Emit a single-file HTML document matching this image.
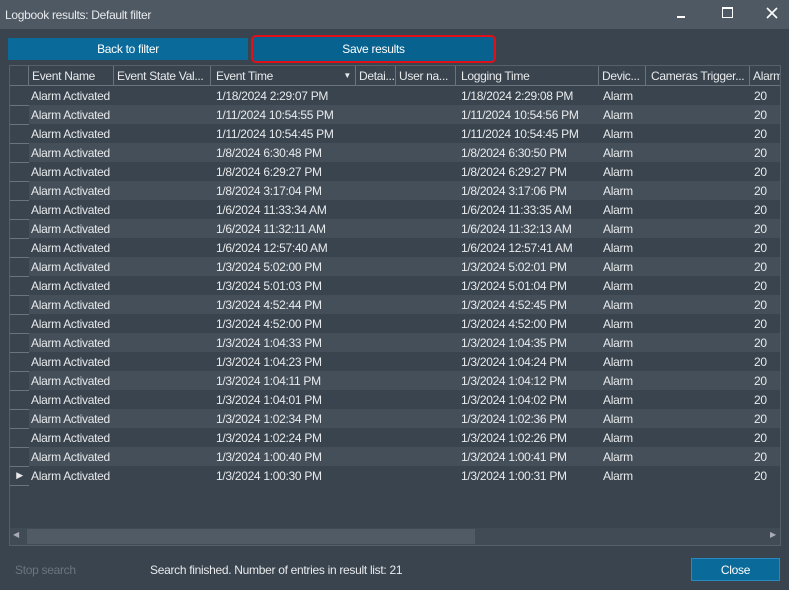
<!DOCTYPE html><html><head><style>
body{margin:0;width:789px;height:590px;background:#3a444e;font-family:"Liberation Sans",sans-serif;font-size:12px;color:#e8eaec;position:relative;overflow:hidden;letter-spacing:-0.3px}
.a{position:absolute;white-space:nowrap}
.tb{left:0;top:0;width:789px;height:29px;background:#4f5964}
.btn{height:22px;background:#0a6a9a;color:#fff;text-align:center;line-height:22px}
.grid{left:9px;top:65px;width:772px;height:481px;border:1px solid #56606a;box-sizing:border-box;background:#3a444e;overflow:hidden}
.hd{position:absolute;top:0;height:20px;line-height:20px;border-right:1px solid #6b747d;border-bottom:1px solid #6b747d;box-sizing:border-box;padding-left:3px;overflow:hidden}
table{position:absolute;left:0;top:20px;border-collapse:collapse;table-layout:fixed}
td{height:19px;padding:0;white-space:nowrap;overflow:hidden}
tr:nth-child(even){background:#454f59}
td.rh{width:19px;background:#3a444e;border-bottom:1px solid #6b747d;box-sizing:border-box}
</style></head><body>
<div class="a tb"></div>
<div class="a" style="left:5px;top:8px;font-size:12px">Logbook results: Default filter</div>
<div class="a" style="left:677px;top:16px;width:8px;height:2px;background:#fff"></div>
<div class="a" style="left:722px;top:7px;width:9px;height:8px;border:1.5px solid #fff;border-top-width:2px"></div>
<svg class="a" style="left:766px;top:7px" width="12" height="12"><path d="M1 1L11 11M11 1L1 11" stroke="#fff" stroke-width="1.6"/></svg>
<div class="a btn" style="left:8px;top:38px;width:240px">Back to filter</div>
<div class="a btn" style="left:251px;top:35px;width:241px;height:24px;line-height:24px;border:2px solid #e0101a;border-radius:5px;background:#07628f">Save results</div>
<div class="a grid">
<div class="hd" style="left:0;width:19px"></div>
<div class="hd" style="left:19px;width:85px">Event Name</div>
<div class="hd" style="left:104px;width:97px">Event State Val...</div>
<div class="hd" style="left:201px;width:145px;padding-left:5px">Event Time<span style="position:absolute;right:4px;font-size:8px">▼</span></div>
<div class="hd" style="left:346px;width:40px">Detai...</div>
<div class="hd" style="left:386px;width:60px">User na...</div>
<div class="hd" style="left:446px;width:143px;padding-left:5px">Logging Time</div>
<div class="hd" style="left:589px;width:47px">Devic...</div>
<div class="hd" style="left:636px;width:104px;padding-left:5px">Cameras Trigger...</div>
<div class="hd" style="left:740px;width:40px">Alarm</div>
<table style="width:770px">
<colgroup><col style="width:19px"><col style="width:2px"><col style="width:185px"><col style="width:245px"><col style="width:142px"><col style="width:151px"><col style="width:26px"></colgroup>
<tr><td class="rh"></td><td></td><td>Alarm Activated</td><td>1/18/2024 2:29:07 PM</td><td>1/18/2024 2:29:08 PM</td><td>Alarm</td><td>20</td></tr>
<tr><td class="rh"></td><td></td><td>Alarm Activated</td><td>1/11/2024 10:54:55 PM</td><td>1/11/2024 10:54:56 PM</td><td>Alarm</td><td>20</td></tr>
<tr><td class="rh"></td><td></td><td>Alarm Activated</td><td>1/11/2024 10:54:45 PM</td><td>1/11/2024 10:54:45 PM</td><td>Alarm</td><td>20</td></tr>
<tr><td class="rh"></td><td></td><td>Alarm Activated</td><td>1/8/2024 6:30:48 PM</td><td>1/8/2024 6:30:50 PM</td><td>Alarm</td><td>20</td></tr>
<tr><td class="rh"></td><td></td><td>Alarm Activated</td><td>1/8/2024 6:29:27 PM</td><td>1/8/2024 6:29:27 PM</td><td>Alarm</td><td>20</td></tr>
<tr><td class="rh"></td><td></td><td>Alarm Activated</td><td>1/8/2024 3:17:04 PM</td><td>1/8/2024 3:17:06 PM</td><td>Alarm</td><td>20</td></tr>
<tr><td class="rh"></td><td></td><td>Alarm Activated</td><td>1/6/2024 11:33:34 AM</td><td>1/6/2024 11:33:35 AM</td><td>Alarm</td><td>20</td></tr>
<tr><td class="rh"></td><td></td><td>Alarm Activated</td><td>1/6/2024 11:32:11 AM</td><td>1/6/2024 11:32:13 AM</td><td>Alarm</td><td>20</td></tr>
<tr><td class="rh"></td><td></td><td>Alarm Activated</td><td>1/6/2024 12:57:40 AM</td><td>1/6/2024 12:57:41 AM</td><td>Alarm</td><td>20</td></tr>
<tr><td class="rh"></td><td></td><td>Alarm Activated</td><td>1/3/2024 5:02:00 PM</td><td>1/3/2024 5:02:01 PM</td><td>Alarm</td><td>20</td></tr>
<tr><td class="rh"></td><td></td><td>Alarm Activated</td><td>1/3/2024 5:01:03 PM</td><td>1/3/2024 5:01:04 PM</td><td>Alarm</td><td>20</td></tr>
<tr><td class="rh"></td><td></td><td>Alarm Activated</td><td>1/3/2024 4:52:44 PM</td><td>1/3/2024 4:52:45 PM</td><td>Alarm</td><td>20</td></tr>
<tr><td class="rh"></td><td></td><td>Alarm Activated</td><td>1/3/2024 4:52:00 PM</td><td>1/3/2024 4:52:00 PM</td><td>Alarm</td><td>20</td></tr>
<tr><td class="rh"></td><td></td><td>Alarm Activated</td><td>1/3/2024 1:04:33 PM</td><td>1/3/2024 1:04:35 PM</td><td>Alarm</td><td>20</td></tr>
<tr><td class="rh"></td><td></td><td>Alarm Activated</td><td>1/3/2024 1:04:23 PM</td><td>1/3/2024 1:04:24 PM</td><td>Alarm</td><td>20</td></tr>
<tr><td class="rh"></td><td></td><td>Alarm Activated</td><td>1/3/2024 1:04:11 PM</td><td>1/3/2024 1:04:12 PM</td><td>Alarm</td><td>20</td></tr>
<tr><td class="rh"></td><td></td><td>Alarm Activated</td><td>1/3/2024 1:04:01 PM</td><td>1/3/2024 1:04:02 PM</td><td>Alarm</td><td>20</td></tr>
<tr><td class="rh"></td><td></td><td>Alarm Activated</td><td>1/3/2024 1:02:34 PM</td><td>1/3/2024 1:02:36 PM</td><td>Alarm</td><td>20</td></tr>
<tr><td class="rh"></td><td></td><td>Alarm Activated</td><td>1/3/2024 1:02:24 PM</td><td>1/3/2024 1:02:26 PM</td><td>Alarm</td><td>20</td></tr>
<tr><td class="rh"></td><td></td><td>Alarm Activated</td><td>1/3/2024 1:00:40 PM</td><td>1/3/2024 1:00:41 PM</td><td>Alarm</td><td>20</td></tr>
<tr><td class="rh" style="text-align:center;font-size:9px">▶</td><td></td><td>Alarm Activated</td><td>1/3/2024 1:00:30 PM</td><td>1/3/2024 1:00:31 PM</td><td>Alarm</td><td>20</td></tr>
</table>
<div class="a" style="left:0;top:462px;width:770px;height:17px;background:#414b55"></div>
<div class="a" style="left:17px;top:463px;width:448px;height:15px;background:#505b66"></div>
<div class="a" style="left:3px;top:464px;font-size:8px;color:#aab">◀</div>
<div class="a" style="left:760px;top:464px;font-size:8px;color:#aab">▶</div>
</div>
<div class="a" style="left:15px;top:563px;color:#6b7580">Stop search</div>
<div class="a" style="left:150px;top:563px">Search finished. Number of entries in result list: 21</div>
<div class="a btn" style="left:691px;top:558px;width:89px;height:23px;line-height:23px;border:1px solid #2a8ac0;box-sizing:border-box;color:#fff">Close</div>
</body></html>
